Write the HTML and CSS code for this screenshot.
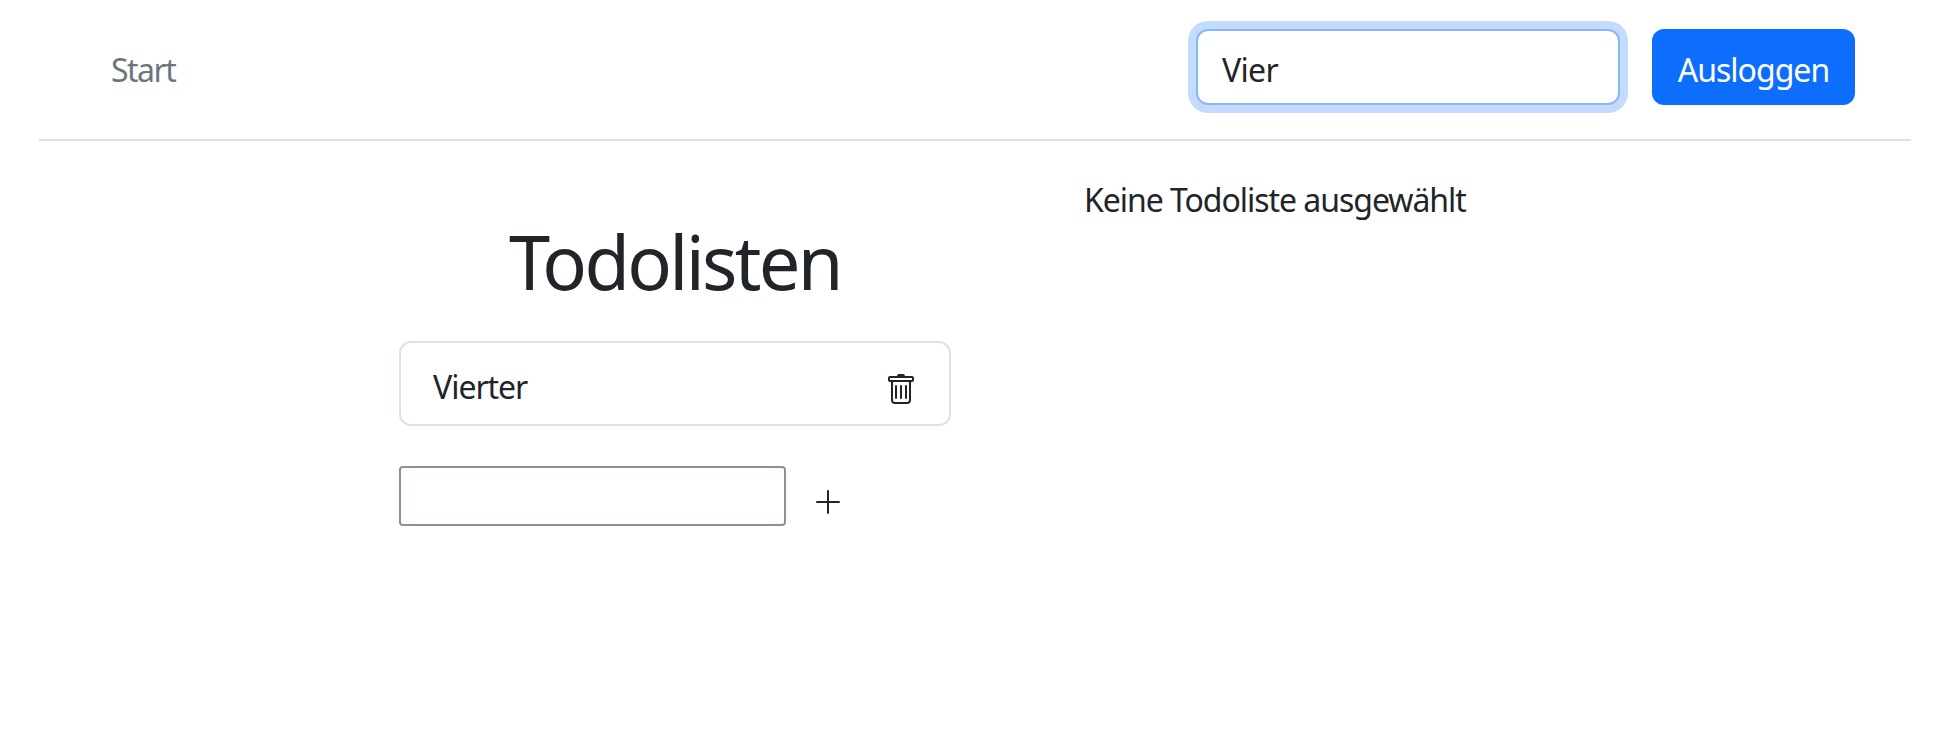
FILE: index.html
```html
<!DOCTYPE html>
<html lang="de">
<head>
<meta charset="utf-8">
<title>Todolisten</title>
<link rel="stylesheet" href="styles.css">
</head>
<body>
<header class="topbar">
  <a class="nav-link">Start</a>
  <div class="actions">
    <input class="search" type="text" value="Vier" aria-label="Suche">
    <button class="logout" type="button">Ausloggen</button>
  </div>
</header>
<main class="content">
  <section class="lists">
    <h1 class="title">Todolisten</h1>
    <div class="card">
      <span class="card-name">Vierter</span>
      <svg class="icon" viewBox="0 0 16 16" fill="currentColor"><path d="M5.5 5.5A.5.5 0 0 1 6 6v6a.5.5 0 0 1-1 0V6a.5.5 0 0 1 .5-.5Zm2.5 0a.5.5 0 0 1 .5.5v6a.5.5 0 0 1-1 0V6a.5.5 0 0 1 .5-.5Zm3 .5a.5.5 0 0 0-1 0v6a.5.5 0 0 0 1 0V6Z"/><path d="M14.5 3a1 1 0 0 1-1 1H13v9a2 2 0 0 1-2 2H5a2 2 0 0 1-2-2V4h-.5a1 1 0 0 1-1-1V2a1 1 0 0 1 1-1H6a1 1 0 0 1 1-1h2a1 1 0 0 1 1 1h3.5a1 1 0 0 1 1 1v1ZM4.118 4 4 4.059V13a1 1 0 0 0 1 1h6a1 1 0 0 0 1-1V4.059L11.882 4H4.118ZM2.5 3h11V2h-11v1Z"/></svg>
    </div>
    <div class="add-row">
      <input class="new-list" type="text" aria-label="Neue Liste">
      <svg class="icon add" viewBox="0 0 16 16" fill="currentColor"><path d="M8 2a.5.5 0 0 1 .5.5v5h5a.5.5 0 0 1 0 1h-5v5a.5.5 0 0 1-1 0v-5h-5a.5.5 0 0 1 0-1h5v-5A.5.5 0 0 1 8 2Z"/></svg>
    </div>
  </section>
  <p class="empty">Keine Todoliste ausgewählt</p>
</main>
</body>
</html>
```
FILE: styles.css
```css
* { box-sizing: border-box; }
body {
  margin: 0;
  background: #fff;
  color: #212529;
  font: 32px/48px "Noto Sans", "Open Sans", sans-serif;
  letter-spacing: -1.04px;
}
.topbar {
  display: flex;
  justify-content: space-between;
  height: 141px;
  margin: 0 45px 0 39px;
  padding: 29px 56px 0 72px;
  border-bottom: 2px solid #dee2e6;
}
.nav-link { padding-top: 17px; color: #6c757d; letter-spacing: -1.5px; }
.actions { display: flex; gap: 32px; }
.search {
  width: 424px;
  height: 76px;
  padding: 5px 24px 0;
  border: 2px solid #86b7fe;
  border-radius: 12px;
  box-shadow: 0 0 0 8px #c2dbff;
  outline: none;
  color: inherit;
  font: inherit;
  letter-spacing: -0.7px;
}
.logout {
  width: 203px;
  height: 76px;
  padding: 6px 0 0;
  border: 0;
  border-radius: 12px;
  background: #0d6efd;
  color: #fff;
  font: inherit;
  letter-spacing: -1px;
}
.content {
  display: grid;
  grid-template-columns: 552px auto;
  column-gap: 133px;
  justify-content: start;
  padding-left: 399px;
}
.title {
  margin: 73px 0 0;
  font-size: 74px;
  font-weight: 400;
  line-height: 96px;
  letter-spacing: -2.7px;
  text-align: center;
}
.card {
  display: flex;
  justify-content: space-between;
  height: 85px;
  margin-top: 31px;
  padding: 20px 32px 0;
  border: 2px solid #dee2e6;
  border-radius: 12px;
}
.icon { width: 32px; height: 32px; }
.card .icon { margin-top: 11px; }
.add-row { display: flex; gap: 26px; margin-top: 40px; }
.new-list {
  width: 387px;
  height: 60px;
  border: 2px solid #8f8f9d;
  border-radius: 4px;
}
.add { margin-top: 20px; }
.empty { margin: 35px 0 0; white-space: nowrap; }
```
